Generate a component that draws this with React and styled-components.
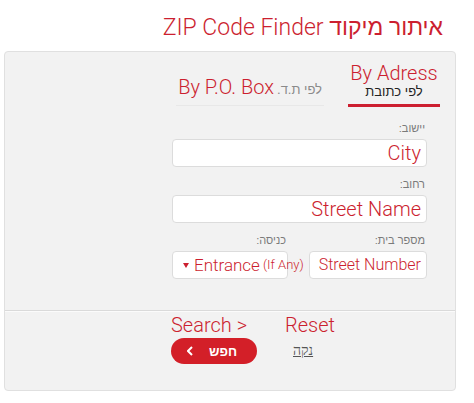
import React from 'react'
import styled, { createGlobalStyle } from 'styled-components'

const GlobalStyle = createGlobalStyle`
    body {
        margin: 0;
        background: #fff;
        font-family: Roboto, "Liberation Sans", sans-serif;
    }
`

const Page = styled.div`
    width: 474px;
    height: 403px;
    padding-top: 13px;
    box-sizing: border-box;
`
const Title = styled.h1`
    margin: 0 31px 0 0;
    direction: rtl;
    text-align: right;
    font-size: 23px;
    font-weight: 300;
    line-height: 30px;
    color: #cc1f30;
`
const Panel = styled.div`
    margin: 8px 0 0 4px;
    width: 452px;
    height: 340px;
    box-sizing: border-box;
    background: #f2f2f2;
    border: 1px solid #e0e0e0;
    border-radius: 4px;
    direction: rtl;
    display: flex;
    flex-direction: column;
`
const Tabs = styled.div`
    display: flex;
    align-items: flex-end;
    gap: 24px;
    padding: 10px 15px 0 0;
`
const Tab = styled.div`
    width: ${p => p.$active ? '92px' : 'auto'};
    text-align: center;
    padding: 0 ${p => p.$active ? '0' : '2px'} 4px;
    border-bottom: ${p => p.$active ? '3px solid #cc1f30' : '1px solid #e8e8e8'};
    margin-bottom: ${p => p.$active ? '0' : '1px'};
`
const TabTitle = styled.div`
    font-size: 20px;
    font-weight: 300;
    line-height: 22px;
    color: #cc1f30;
    direction: ltr;
`
const TabSub = styled.div`
    font-family: "Liberation Sans", sans-serif;
    font-size: 13px;
    line-height: 16px;
    color: #222;
`
const TabInline = styled.div`
    display: flex;
    align-items: baseline;
    gap: 3px;
    line-height: 22px;
`
const TabHint = styled.span`
    font-family: "Liberation Sans", sans-serif;
    font-size: 13px;
    color: #8a8a8a;
`
const Form = styled.div`
    width: 255px;
    margin: 14px 28px 0 0;
`
const Field = styled.div`
    margin-bottom: ${p => p.$last ? '0' : '10px'};
`
const Label = styled.div`
    font-family: "Liberation Sans", sans-serif;
    font-size: 11px;
    line-height: 14px;
    color: #7a7a7a;
    padding-right: 2px;
    margin-bottom: 4px;
`
const Input = styled.div`
    height: 28px;
    box-sizing: border-box;
    background: #fff;
    border: 1px solid #dcdcdc;
    border-radius: 4px;
    padding: 0 5px;
    font-size: ${p => p.$small ? '16px' : '20px'};
    font-weight: 300;
    line-height: 26px;
    color: #cc1f30;
    white-space: nowrap;
`
const Row = styled.div`
    display: grid;
    grid-template-columns: 118px 116px;
    column-gap: 21px;
`
const Select = styled(Input)`
    direction: ltr;
    padding-left: 8px;
    font-size: 17px;
    overflow: visible;
    display: flex;
    align-items: center;
`
const Caret = styled.span`
    flex: none;
    width: 0;
    height: 0;
    border-left: 3px solid transparent;
    border-right: 3px solid transparent;
    border-top: 5px solid #cc1f30;
    margin: 1px 5px 0 2px;
`
const Hint = styled.span`
    font-size: 13px;
    margin-left: 3px;
`
const Divider = styled.div`
    margin-top: auto;
    height: 1px;
    background: #dadada;
    box-shadow: 0 1px 0 #fbfbfb;
`
const Actions = styled.div`
    direction: ltr;
    display: flex;
    gap: 28px;
    padding: 3px 0 26px 166px;
`
const ActionCol = styled.div`
    display: flex;
    flex-direction: column;
    align-items: flex-start;
`
const ActionText = styled.div`
    font-size: 20px;
    font-weight: 300;
    line-height: 22px;
    color: #cc1f30;
    margin-bottom: 2px;
`
const Pill = styled.button`
    direction: rtl;
    width: 86px;
    height: 26px;
    border: 0;
    border-radius: 13px;
    background: #d31f28;
    color: #fff;
    display: flex;
    align-items: center;
    gap: 16px;
    padding: 0 20px 0 0;
    font-family: "Liberation Sans", sans-serif;
    font-size: 13px;
    font-weight: 700;
    cursor: pointer;
`
const ResetLink = styled.a`
    margin: 5px 0 0 8px;
    font-family: "Liberation Serif", serif;
    font-size: 14px;
    color: #555;
    text-decoration: underline;
`

export default function App() {
    return (
        <Page>
            <GlobalStyle />
            <Title>איתור מיקוד ZIP Code Finder</Title>
            <Panel>
                <Tabs>
                    <Tab $active>
                        <TabTitle>By Adress</TabTitle>
                        <TabSub>לפי כתובת</TabSub>
                    </Tab>
                    <Tab>
                        <TabInline>
                            <TabHint>לפי ת.ד.</TabHint>
                            <TabTitle>By P.O. Box</TabTitle>
                        </TabInline>
                    </Tab>
                </Tabs>
                <Form>
                    <Field>
                        <Label>יישוב:</Label>
                        <Input>City</Input>
                    </Field>
                    <Field>
                        <Label>רחוב:</Label>
                        <Input>Street Name</Input>
                    </Field>
                    <Row>
                        <Field $last>
                            <Label>מספר בית:</Label>
                            <Input $small>Street Number</Input>
                        </Field>
                        <Field $last>
                            <Label>כניסה:</Label>
                            <Select>
                                <Caret />Entrance<Hint>(If Any)</Hint>
                            </Select>
                        </Field>
                    </Row>
                </Form>
                <Divider />
                <Actions>
                    <ActionCol>
                        <ActionText>Search &gt;</ActionText>
                        <Pill>
                            חפש
                            <svg width="6" height="10" viewBox="0 0 6 10">
                                <polyline points="5,1 1,5 5,9" fill="none" stroke="#fff" strokeWidth="2" />
                            </svg>
                        </Pill>
                    </ActionCol>
                    <ActionCol>
                        <ActionText>Reset</ActionText>
                        <ResetLink>נקה</ResetLink>
                    </ActionCol>
                </Actions>
            </Panel>
        </Page>
    )
}
